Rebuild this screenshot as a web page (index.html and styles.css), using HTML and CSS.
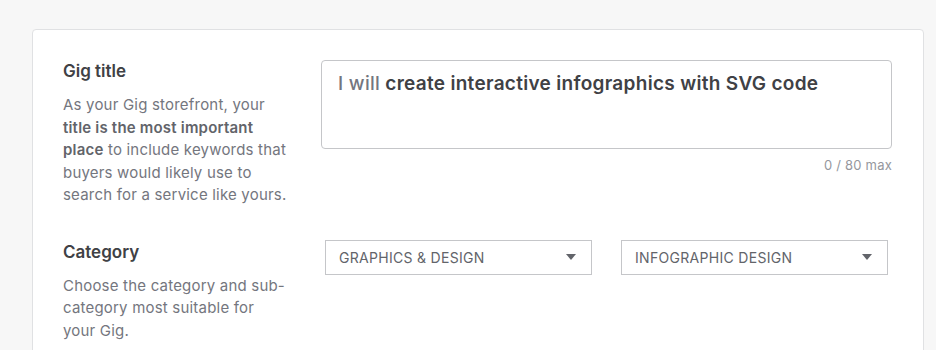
FILE: index.html
```html
<!DOCTYPE html>
<html lang="en">
<head>
    <meta charset="UTF-8">
    <meta name="viewport" content="width=device-width, initial-scale=1.0">
    <title>Gig overview</title>
    <link rel="stylesheet" href="styles.css">
</head>
<body>
    <div class="page">
        <div class="card">
            <div class="row">
                <div class="info">
                    <h3 class="label">Gig title</h3>
                    <p class="desc">As your Gig storefront, your <b>title is the most important place</b> to include keywords that buyers would likely use to search for a service like yours.</p>
                </div>
                <div class="field">
                    <div class="titleBox"><span class="prefix">I will</span> create interactive infographics with SVG code</div>
                    <div class="counter">0 / 80 max</div>
                </div>
            </div>
            <div class="row">
                <div class="info">
                    <h3 class="label">Category</h3>
                    <p class="desc">Choose the category and sub-category most suitable for your Gig.</p>
                </div>
                <div class="field selects">
                    <div class="select"><span>GRAPHICS &amp; DESIGN</span><span class="caret"></span></div>
                    <div class="select"><span>INFOGRAPHIC DESIGN</span><span class="caret"></span></div>
                </div>
            </div>
        </div>
    </div>
</body>
</html>
```

FILE: styles.css
```css
*{
    box-sizing: border-box;
}
body{
    margin: 0;
    background-color: #f7f7f7;
    font-family: Inter, "Noto Sans", sans-serif;
}
.page{
    padding: 29px 12px 0 32px;
    height: 350px;
    overflow: hidden;
}
.card{
    background-color: white;
    border: solid 1px #e0e1e3;
    border-radius: 4px 4px 0 0;
    padding: 30px 31px 40px 30px;
    min-height: 400px;
}
.row{
    display: flex;
    gap: 32px;
    margin-bottom: 34px;
}
.info{
    width: 226px;
    flex-shrink: 0;
}
.label{
    margin: 0 0 12px;
    font-size: 17px;
    line-height: 22px;
    font-weight: 600;
    color: #404145;
}
.desc{
    margin: 0;
    font-size: 15px;
    letter-spacing: 0.2px;
    line-height: 22.5px;
    color: #74767e;
}
.desc b{
    font-weight: 600;
    color: #62646a;
}
.field{
    flex: 1;
}
.titleBox{
    height: 89px;
    border: solid 1px #c5c6c9;
    border-radius: 4px;
    padding: 11px 16px;
    font-size: 19px;
    letter-spacing: 0.3px;
    line-height: 24px;
    font-weight: 600;
    color: #404145;
}
.prefix{
    color: #74767e;
    font-weight: 500;
}
.counter{
    margin-top: 8px;
    text-align: right;
    font-size: 13px;
    letter-spacing: 0.2px;
    color: #95979d;
}
.selects{
    display: flex;
    gap: 29px;
    padding: 0 4px;
    margin-top: -1px;
}
.select{
    flex: 1;
    height: 35px;
    border: solid 1px #c5c6c9;
    display: flex;
    align-items: center;
    justify-content: space-between;
    padding: 0 13px;
    font-size: 14px;
    letter-spacing: 0.3px;
    color: #62646a;
}
.caret{
    width: 0;
    height: 0;
    border-left: 5px solid transparent;
    border-right: 5px solid transparent;
    border-top: 6px solid #62646a;
    margin-right: 2px;
}
```
